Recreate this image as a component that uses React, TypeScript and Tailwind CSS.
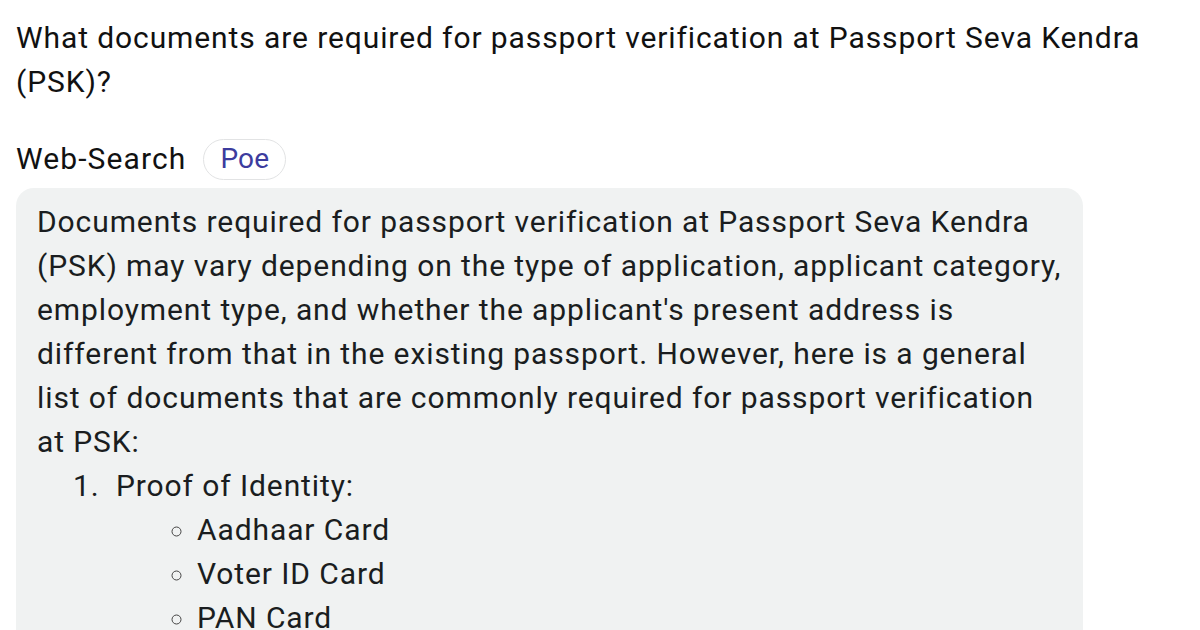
export default function App() {
  return (
    <div className="w-[1200px] h-[630px] overflow-hidden bg-white px-4 pt-4 font-['Roboto',sans-serif] tracking-[0.9px]">
      <div className="whitespace-nowrap text-[30px] leading-[44px] text-[#111111]">
        What documents are required for passport verification at Passport Seva Kendra
        <br />
        (PSK)?
      </div>

      <div className="mt-[34px] flex h-[42px] items-center gap-[17px]">
        <span className="text-[30px] leading-[42px] tracking-[1.1px] text-[#111111]">Web-Search</span>
        <span className="flex h-[41px] items-center rounded-full border-[1.5px] border-[#e2e3e4] px-[16px] text-[28px] tracking-[0.2px] text-[#3c3c9e]">
          Poe
        </span>
      </div>

      <div className="mt-[8px] w-[1067px] rounded-[18px] bg-[#f0f2f2] pl-[21px] pr-[12px] pt-[12px] pb-6 text-[30px] leading-[44px] text-[#1a1d20]">
        <p className="whitespace-nowrap">
          Documents required for passport verification at Passport Seva Kendra
          <br />
          (PSK) may vary depending on the type of application, applicant category,
          <br />
          employment type, and whether the applicant's present address is
          <br />
          different from that in the existing passport. However, here is a general
          <br />
          list of documents that are commonly required for passport verification
          <br />
          at PSK:
        </p>
        <ol className="list-none pl-[36px]">
          <li className="flex">
            <span className="w-[43px] shrink-0">1.</span>
            <div>
              Proof of Identity:
              <ul className="list-[circle] pl-[81px] marker:text-[#444]">
                <li>Aadhaar Card</li>
                <li>Voter ID Card</li>
                <li>PAN Card</li>
              </ul>
            </div>
          </li>
        </ol>
      </div>
    </div>
  );
}
